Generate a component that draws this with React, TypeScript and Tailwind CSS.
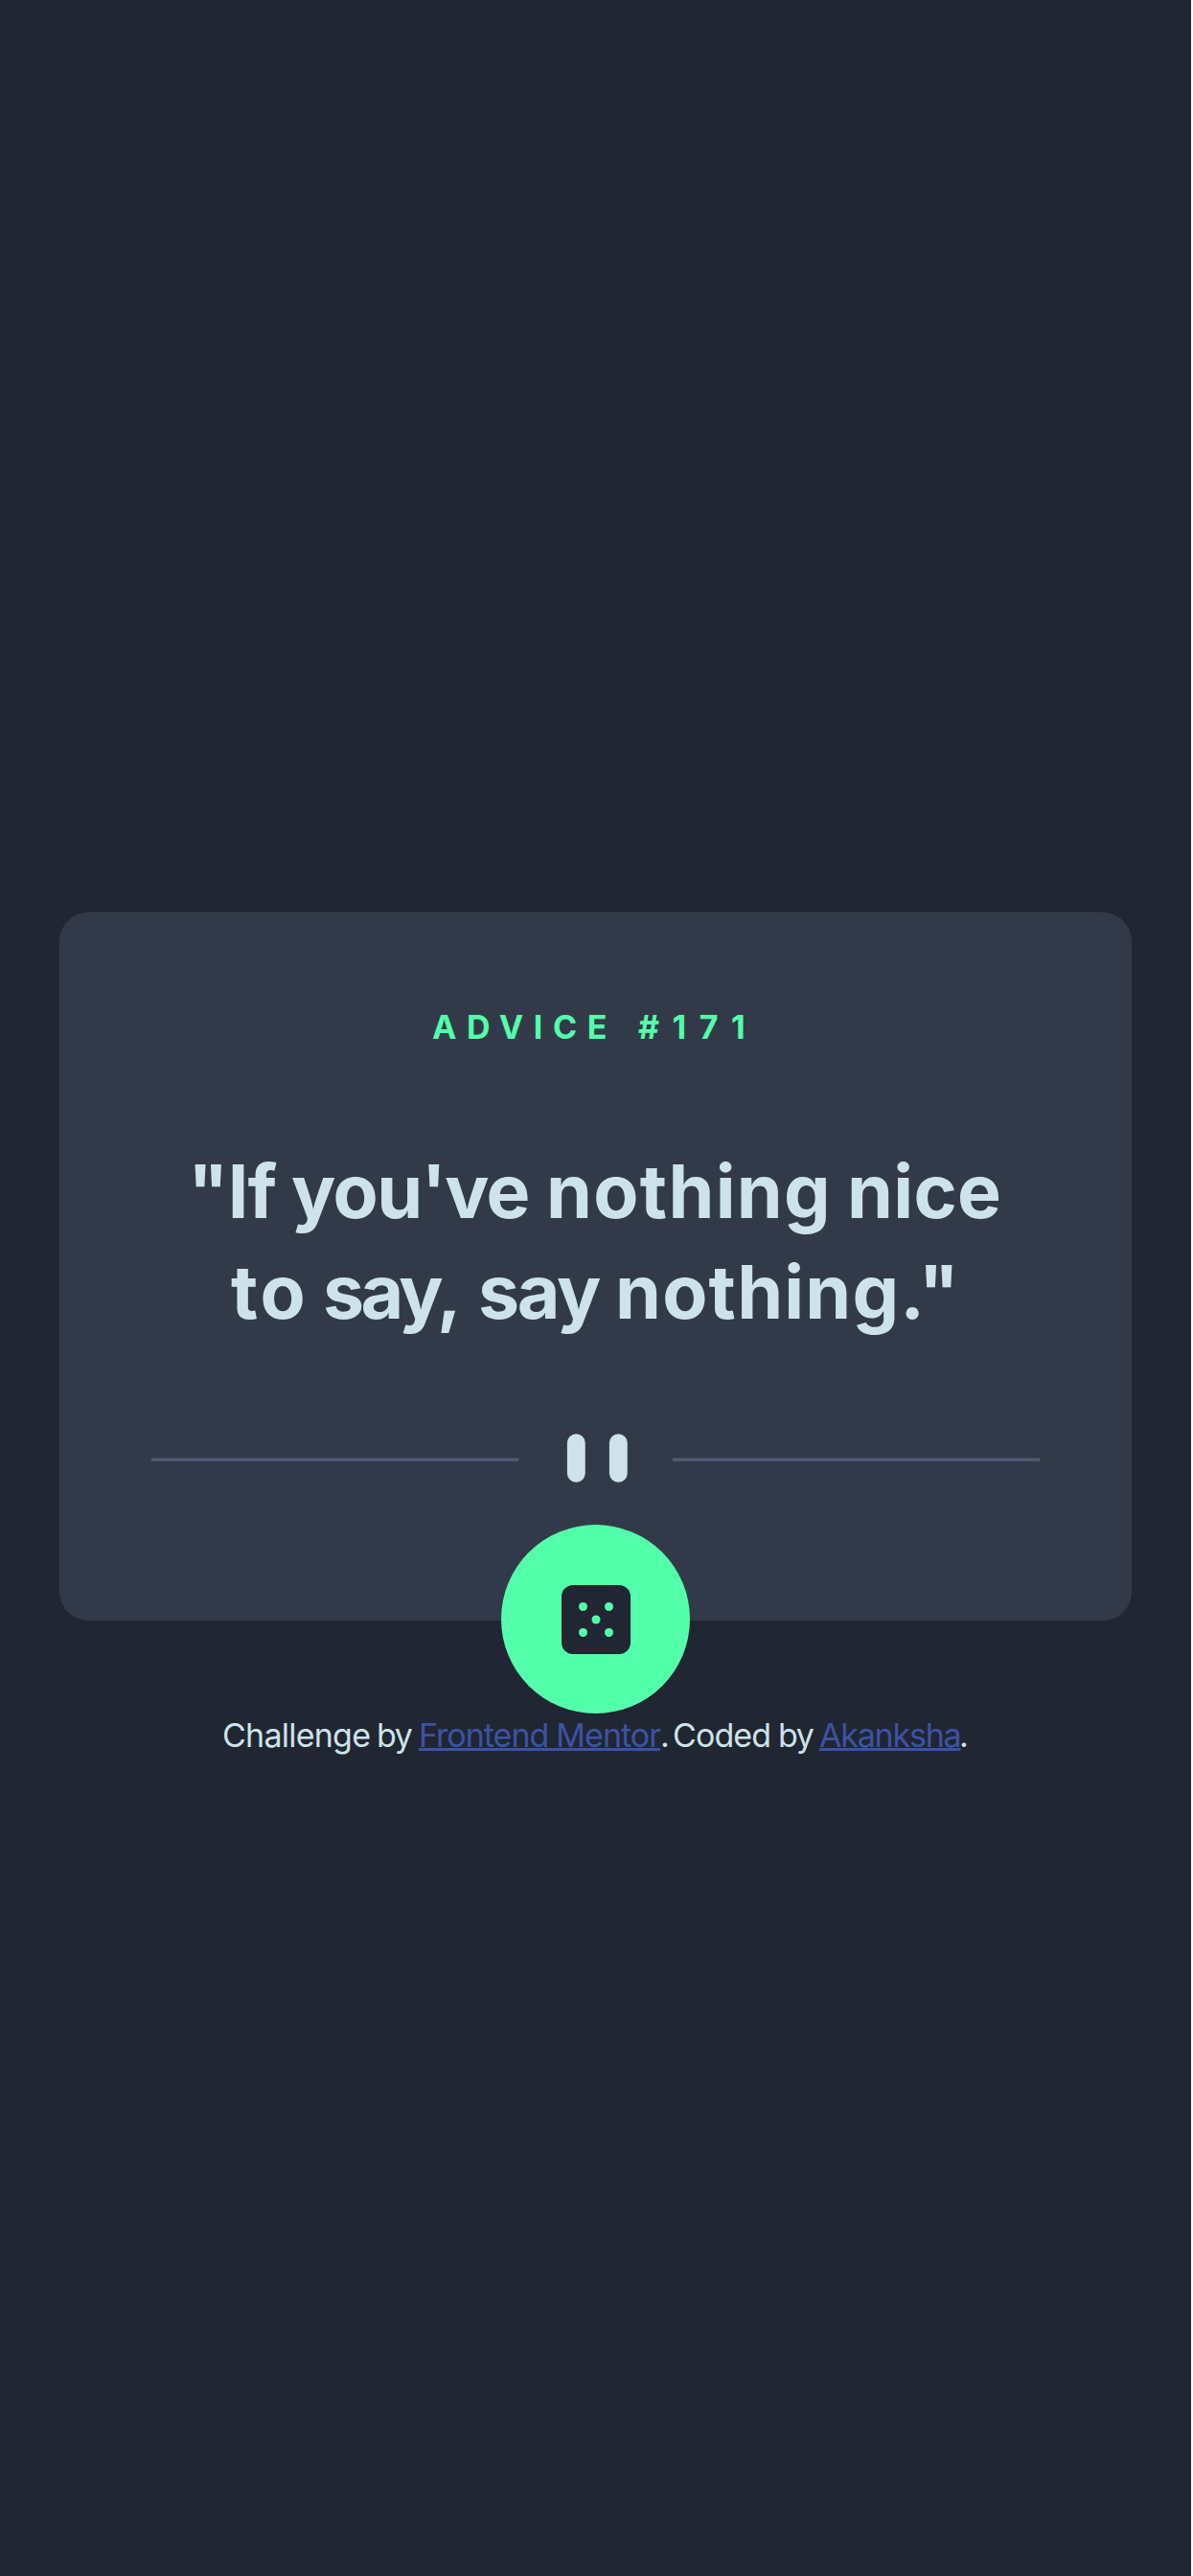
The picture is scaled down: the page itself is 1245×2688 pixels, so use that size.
export default function App() {
  return (
    <div className="h-[2688px] w-[1245px] bg-white">
      <div className="flex h-full w-[1243px] flex-col bg-[#202632] pt-[952px] font-['Inter',sans-serif] text-[#cee3e9]">
        <main className="relative ml-[62px] flex h-[739px] w-[1119px] flex-col rounded-[30px] bg-[#323a49]">
          <h1 className="mt-[99px] ml-[389px] flex text-[34px] leading-[42px] font-bold whitespace-pre text-[#53ffaa]">
            <span className="w-[215px] tracking-[10.6px]">ADVICE </span>
            <span className="tracking-[13.5px]">#171</span>
          </h1>
          <p className="mt-[98px] text-[77px] leading-[105px] font-bold whitespace-pre">
            <span className="ml-[134px] flex">
              <span className="w-[108px] tracking-[-0.75px]">"If </span>
              <span className="w-[266px] tracking-[-1.5px]">you've </span>
              <span className="w-[314px] tracking-[1.3px]">nothing </span>
              <span className="tracking-[0.3px]">nice</span>
            </span>
            <span className="ml-[179px] flex">
              <span className="w-[96px] tracking-[3px]">to </span>
              <span className="w-[162px] tracking-[-3.6px]">say, </span>
              <span className="w-[143px] tracking-[-2.3px]">say </span>
              <span className="tracking-[1.2px]">nothing."</span>
            </span>
          </p>
          <svg className="mt-[95px] h-[51px] w-[927.5px] self-center" viewBox="0 0 295 16">
            <path fill="#4f5d74" d="M0 8h122v1H0zM173 8h122v1H173z" />
            <g fill="#cee3e9">
              <rect x="138" width="6" height="16" rx="3" />
              <rect x="152" width="6" height="16" rx="3" />
            </g>
          </svg>
          <button className="absolute top-[639px] left-[461px] flex size-[197px] items-center justify-center rounded-full bg-[#53ffaa]">
            <svg className="ml-px size-[72px]" viewBox="0 0 24 24">
              <rect width="24" height="24" rx="4" fill="#202632" />
              <g fill="#53ffaa">
                <circle cx="7.5" cy="7.5" r="1.5" />
                <circle cx="16.5" cy="7.5" r="1.5" />
                <circle cx="12" cy="12" r="1.5" />
                <circle cx="7.5" cy="16.5" r="1.5" />
                <circle cx="16.5" cy="16.5" r="1.5" />
              </g>
            </svg>
          </button>
        </main>
        <footer className="mt-[97px] ml-[232px] flex text-[34px] leading-[46px] font-normal whitespace-pre">
          <span className="w-[161px] tracking-[-0.76px]">Challenge </span>
          <span className="w-[44px] tracking-[-1.5px]">by </span>
          <a className="w-[252px] tracking-[-1px] text-[#3e52a3] underline decoration-[3px] underline-offset-1 [word-spacing:-0.5px]">
            Frontend Mentor
          </a>
          <span className="w-[13px] tracking-[-3px]">. </span>
          <span className="w-[110px] tracking-[-0.9px]">Coded </span>
          <span className="w-[43px] tracking-[-1.5px]">by </span>
          <a className="w-[146px] tracking-[-1.2px] text-[#3e52a3] underline decoration-[3px] underline-offset-1">
            Akanksha
          </a>
          <span>.</span>
        </footer>
      </div>
    </div>
  );
}
